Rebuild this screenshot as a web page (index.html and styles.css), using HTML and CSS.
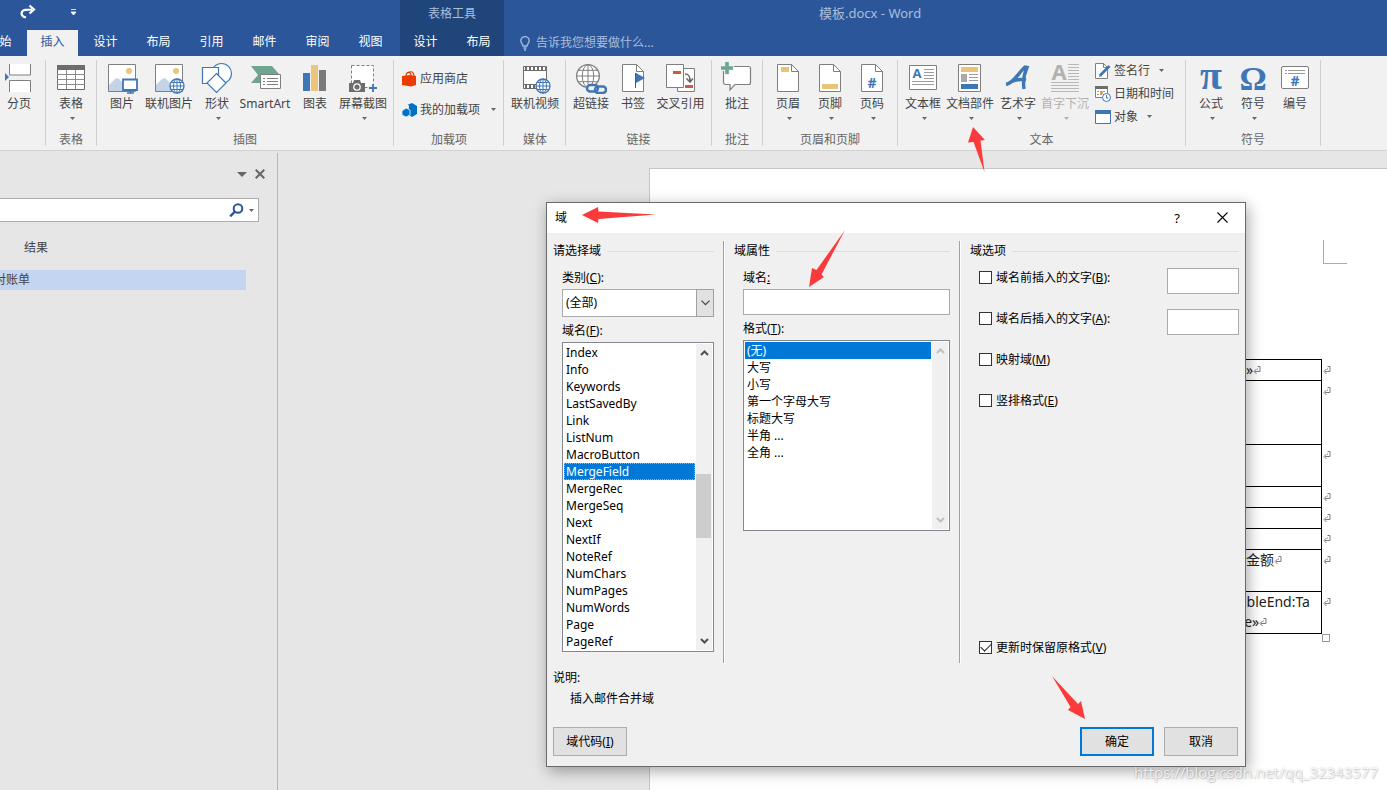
FILE: index.html
```html
<!DOCTYPE html>
<html lang="zh-CN">
<head>
<meta charset="utf-8">
<title>模板.docx - Word</title>
<link rel="stylesheet" href="styles.css">
</head>
<body>
<svg class="defs" aria-hidden="true">
  <symbol id="ret" viewBox="0 0 8 9"><path d="M4.500.5H7V5.500H2M4.500 2.500v1M3.500 3L1 5.500L3.500 8" fill="none" stroke="#7b7b7b"/></symbol>
  <symbol id="globe" viewBox="0 0 16 16"><circle cx="8" cy="8" r="7" fill="#fff"/><path vector-effect="non-scaling-stroke" d="M8 1v14M1 8h14M2 4.500h12M2 11.500h12" fill="none" stroke="currentColor"/><ellipse vector-effect="non-scaling-stroke" cx="8" cy="8" rx="3.500" ry="7" fill="none" stroke="currentColor"/><circle vector-effect="non-scaling-stroke" cx="8" cy="8" r="7" fill="none" stroke="currentColor" stroke-width="1.300"/></symbol>
  <symbol id="photo" viewBox="0 0 32 32"><path d="M2.500 2.500h27v27h-27z" fill="#fff" stroke="#7f7f7f"/><circle cx="23" cy="9" r="3" fill="#ecc57d"/><path d="M3 29V23l6-6 3-1 5 5 2 2v6z" fill="#c5d3e6"/></symbol>
  <symbol id="page" viewBox="0 0 32 32"><path d="M5.500 2.500h14l7 7v20h-21z" fill="#fff" stroke="#7f7f7f"/><path d="M19.500 2.500v7h7" fill="none" stroke="#7f7f7f"/></symbol>
  <symbol id="down" viewBox="0 0 5 3"><path d="M0 0h5L2.500 3z" fill="currentColor"/></symbol>
</svg>

<header class="titlebar">
  <div class="tb-left">
    <div class="qat">
      <button class="qat-btn" aria-label="恢复"><svg width="16" height="16" viewBox="0 0 16 16"><path d="M6 13.500C2 13 .8 10 2.200 7.500C3.500 5.500 6 5.500 12 5.500M9.500 1.500l4.500 4-4.500 4" fill="none" stroke="#fff" stroke-width="2.200"/></svg></button>
      <button class="qat-btn" aria-label="自定义快速访问工具栏"><svg width="7" height="7" viewBox="0 0 7 7"><path d="M1 .5h5M1 3h5L3.500 6z" fill="#fff" stroke="#fff" stroke-width=".8"/></svg></button>
    </div>
    <nav class="tabs tabs-main">
      <button class="tab">开始</button><button class="tab active">插入</button><button class="tab">设计</button><button class="tab">布局</button><button class="tab">引用</button><button class="tab">邮件</button><button class="tab">审阅</button><button class="tab">视图</button>
    </nav>
  </div>
  <div class="tb-context">
    <div class="context-title">表格工具</div>
    <nav class="tabs"><button class="tab">设计</button><button class="tab">布局</button></nav>
  </div>
  <div class="tb-right">
    <div class="doc-title">模板.docx - Word</div>
    <button class="tellme"><svg width="10" height="15" viewBox="0 0 10 15"><path d="M3 10C3 8 .8 7 .8 4.800a4.200 4.200 0 0 1 8.400 0C9.200 7 7 8 7 10zM3.500 12h3M4 14h2" fill="none" stroke="#a9bedd" stroke-width="1.300"/></svg>告诉我您想要做什么...</button>
  </div>
</header>

<div class="ribbon">
  <section class="group g-page">
    <div class="body">
      <button class="big w38"><svg class="ic" viewBox="0 0 32 32"><path d="M6.500 2v11h21V2M6.500 30V18.500h21V30" fill="#fff" stroke="#7f7f7f"/><path d="M2 11l4 4-4 4z" fill="#3f76b5"/></svg><span>分页</span></button>
    </div>
    <div class="caption"></div>
  </section>
  <section class="group">
    <div class="body">
      <button class="big w42"><svg class="ic" viewBox="0 0 32 32"><path d="M2.500 3.500h27v24h-27z" fill="#fff" stroke="#6d6d6d"/><path d="M2 3h28v5H2z" fill="#6d6d6d"/><path d="M2 12.500h28M2 17.500h28M2 22.500h28M11.500 8v19M20.500 8v19" stroke="#8b8b8b"/></svg><span>表格</span><svg class="dd"><use href="#down"/></svg></button>
    </div>
    <div class="caption">表格</div>
  </section>
  <section class="group wide">
    <div class="body">
      <button class="big w40"><svg class="ic" viewBox="0 0 32 32"><use href="#photo"/><path d="M17 17.500h14v10.500h-14z" fill="#fff" stroke="#3f76b5" stroke-width="1.800"/><path d="M21 31h7M24.500 28v3" stroke="#3f76b5" stroke-width="1.600"/></svg><span>图片</span></button>
      <button class="big w54"><svg class="ic" viewBox="0 0 32 32"><use href="#photo"/><use href="#globe" x="16" y="16" width="16" height="16" color="#3f76b5"/></svg><span>联机图片</span></button>
      <button class="big w42"><svg class="ic" viewBox="0 0 32 32"><g fill="#fff" stroke="#3f76b5" stroke-width="1.200"><circle cx="20.500" cy="11.500" r="10"/><path d="M1.500 5.500h16v16h-16z"/><path d="M15.500 11.500l9.500 9.500-9.500 9.500L6 21z"/></g></svg><span>形状</span><svg class="dd"><use href="#down"/></svg></button>
      <button class="big w54"><svg class="ic" viewBox="0 0 32 32"><path d="M2 4h21l7 8-7 9H2l7-8z" fill="#6fa590"/><path d="M11.500 12.500h20v14h-20z" fill="#fff" stroke="#7f7f7f"/><path d="M14 16.500h2M18 16.500h11M14 19.500h2M18 19.500h11M14 22.500h2M18 22.500h11" stroke="#7f7f7f"/></svg><span>SmartArt</span></button>
      <button class="big w46"><svg class="ic" viewBox="0 0 32 32"><path d="M4 11h7v18H4z" fill="#3f76b5"/><path d="M12 3h7v26h-7z" fill="#ecc57d"/><path d="M20 8h7v21h-7z" fill="#7a7a7a"/></svg><span>图表</span></button>
      <button class="big w50"><svg class="ic" viewBox="0 0 32 32"><path d="M4.500 3.500h22v22h-22z" fill="#fff" stroke="#7f7f7f" stroke-dasharray="3 2"/><path d="M2 21h4l1-3h6l1 3h4v9H2z" fill="#6d6d6d"/><circle cx="10" cy="25" r="3.200" fill="none" stroke="#fff" stroke-width="1.300"/><path d="M21 26h9M25.500 21.500v9" stroke="#f1f1f1" stroke-width="4"/><path d="M22 26h8M26 22v8" stroke="#3f76b5" stroke-width="1.800"/></svg><span>屏幕截图</span><svg class="dd"><use href="#down"/></svg></button>
    </div>
    <div class="caption">插图</div>
  </section>
  <section class="group g-addins">
    <div class="body col">
      <button class="small"><svg class="ic16" viewBox="0 0 16 16"><path d="M0 5l8-1 6 1v9l-5 1.500L0 14z" fill="#eb3c00"/><path d="M4 5.500C4 0 9 0 9 5M6 2c3-2.500 6-1 6 3" fill="none" stroke="#eb3c00" stroke-width="1.200"/></svg>应用商店</button>
      <button class="small"><svg class="ic16" viewBox="0 0 16 16"><path d="M5 3l5-2 5 3v8l-5 3-3-2z" fill="#0072c6"/><circle cx="4" cy="5" r="3" fill="#f1f1f1"/><path d="M0 9l4-3 4 2v5l-4 2-4-2z" fill="#0072c6" stroke="#f1f1f1" stroke-width=".8"/></svg>我的加载项<svg class="dd"><use href="#down"/></svg></button>
    </div>
    <div class="caption">加载项</div>
  </section>
  <section class="group g-media">
    <div class="body">
      <button class="big w54"><svg class="ic" viewBox="0 0 32 32"><path d="M4.500 4.500h23v22h-23z" fill="#fff" stroke="#6d6d6d"/><path d="M5 8.500h22M5 22.500h22" stroke="#6d6d6d"/><path d="M6 6.500h21M6 24.500h21" stroke="#6d6d6d" stroke-width="3" stroke-dasharray="2 2"/><use href="#globe" x="16" y="16" width="16" height="16" color="#3f76b5"/></svg><span>联机视频</span></button>
    </div>
    <div class="caption">媒体</div>
  </section>
  <section class="group wide">
    <div class="body">
      <button class="big w40"><svg class="ic" viewBox="0 0 32 32"><use href="#globe" x="0" y="1" width="26" height="26" color="#7f7f7f"/><rect x="11" y="22" width="21" height="10" fill="#f1f1f1"/><g fill="none" stroke="#3f76b5" stroke-width="2.400"><rect x="12" y="23" width="11" height="6.500" rx="3.200"/><rect x="20" y="24.500" width="11" height="6.500" rx="3.200"/></g></svg><span>超链接</span></button>
      <button class="big w44"><svg class="ic" viewBox="0 0 32 32"><use href="#page"/><path d="M18.500 11v15" stroke="#555"/><path d="M19 11l9 5-9 5z" fill="#3f76b5"/></svg><span>书签</span></button>
      <button class="big w51"><svg class="ic" viewBox="0 0 32 32"><path d="M12.500 6.500h17v23h-17z" fill="#fff" stroke="#7f7f7f"/><path d="M1.500 2.500h17v23h-17z" fill="#fff" stroke="#7f7f7f"/><path d="M8 9h8v3H8zM20 23h8v3h-8z" fill="#cc5b3c"/><path d="M20 12c4 0 5 2 5 7M21.500 16.500L25 20l3-3.500" fill="none" stroke="#666" stroke-width="1.600"/></svg><span>交叉引用</span></button>
    </div>
    <div class="caption">链接</div>
  </section>
  <section class="group">
    <div class="body">
      <button class="big w42"><svg class="ic" viewBox="0 0 32 32"><path d="M4.500 4.500h23a2 2 0 0 1 2 2v14a2 2 0 0 1-2 2H14l-5 5.500v-5.500H4.500a2 2 0 0 1-2-2v-14a2 2 0 0 1 2-2z" fill="#fff" stroke="#7f7f7f" stroke-width="1.200"/><path d="M0 6h13M6 0v13" stroke="#f1f1f1" stroke-width="6"/><path d="M0 6h12M6 0v12" stroke="#6fa590" stroke-width="3.600"/></svg><span>批注</span></button>
    </div>
    <div class="caption">批注</div>
  </section>
  <section class="group">
    <div class="body">
      <button class="big w42"><svg class="ic" viewBox="0 0 32 32"><use href="#page"/><path d="M9 5h8v5H9z" fill="#e9c377"/></svg><span>页眉</span><svg class="dd"><use href="#down"/></svg></button>
      <button class="big w42"><svg class="ic" viewBox="0 0 32 32"><use href="#page"/><path d="M8 22h16v5H8z" fill="#e9c377"/></svg><span>页脚</span><svg class="dd"><use href="#down"/></svg></button>
      <button class="big w42"><svg class="ic" viewBox="0 0 32 32"><use href="#page"/><text x="16" y="26" class="hash">#</text></svg><span>页码</span><svg class="dd"><use href="#down"/></svg></button>
    </div>
    <div class="caption">页眉和页脚</div>
  </section>
  <section class="group wide">
    <div class="body">
      <button class="big w40"><svg class="ic" viewBox="0 0 32 32"><path d="M2.500 3.500h27v24h-27z" fill="#fff" stroke="#7f7f7f"/><text x="10" y="16" class="box-a">A</text><path d="M17 7.500h10M17 10.500h10M17 13.500h10M17 16.500h10M5 19.500h22M5 22.500h22" stroke="#9c9c9c"/></svg><span>文本框</span><svg class="dd"><use href="#down"/></svg></button>
      <button class="big w54"><svg class="ic" viewBox="0 0 32 32"><path d="M4.500 2.500h22v27h-22z" fill="#fff" stroke="#7f7f7f"/><path d="M7 5h17v5H7z" fill="#e9c377"/><path d="M7 12h6v8H7z" fill="#aaa"/><path d="M7 22h17v5H7z" fill="#3f76b5"/><path d="M15 12.500h9M15 15.500h9M15 18.500h9" stroke="#9c9c9c"/></svg><span>文档部件</span><svg class="dd"><use href="#down"/></svg></button>
      <button class="big w42"><svg class="ic" viewBox="0 0 32 32"><path d="M4 22.500C12 21 17 10 23 5l2 .5C22 12 21 20 22 27M10 19.500c4-2 9-2.500 14-1.500" fill="none" stroke="#3f76b5" stroke-width="3.400"/></svg><span>艺术字</span><svg class="dd"><use href="#down"/></svg></button>
      <button class="big w52" disabled><svg class="ic" viewBox="0 0 32 32"><text x="10" y="18" class="drop-a">A</text><path d="M19 2.500h11M19 5.500h11M19 8.500h11M19 11.500h11M19 14.500h11M19 17.500h11M2 20.500h28M2 23.500h28M2 26.500h28M2 29.500h28" stroke="#b9b9b9"/></svg><span>首字下沉</span><svg class="dd"><use href="#down"/></svg></button>
      <div class="stack">
        <button class="small"><svg class="ic16" viewBox="0 0 16 16"><path d="M.5.500h8l4 4v11H.5z" fill="#fff" stroke="#7f7f7f"/><path d="M8.500.500v4h4" fill="none" stroke="#7f7f7f"/><path d="M5 12.500L14.500 3" stroke="#3f76b5" stroke-width="2.600"/><path d="M4 14l1-3 2 2z" fill="#3f76b5"/></svg>签名行<svg class="dd"><use href="#down"/></svg></button>
        <button class="small"><svg class="ic16" viewBox="0 0 16 16"><path d="M.5.500h12v11H.5z" fill="#fff" stroke="#7f7f7f"/><path d="M0 0h13v3H0z" fill="#6d6d6d"/><path d="M2 5.500h9M2 8.500h9" stroke="#999" stroke-dasharray="2 1"/><path d="M5 5h3v3H5z" fill="#e9a13b"/><circle cx="11.500" cy="11.500" r="4" fill="#fff" stroke="#3f76b5"/><path d="M11.500 9v3h2" fill="none" stroke="#3f76b5"/></svg>日期和时间</button>
        <button class="small"><svg class="ic16" viewBox="0 0 16 16"><path d="M.5 1.500h15v13H.5z" fill="#fff" stroke="#3f76b5"/><path d="M0 1h16v4H0z" fill="#3f76b5"/></svg>对象<svg class="dd"><use href="#down"/></svg></button>
      </div>
    </div>
    <div class="caption">文本</div>
  </section>
  <section class="group">
    <div class="body">
      <button class="big w42"><svg class="ic" viewBox="0 0 32 32"><text x="16" y="27" class="sym pi">π</text></svg><span>公式</span><svg class="dd"><use href="#down"/></svg></button>
      <button class="big w42"><svg class="ic" viewBox="0 0 32 32"><text x="16" y="28" class="sym">Ω</text></svg><span>符号</span><svg class="dd"><use href="#down"/></svg></button>
      <button class="big w42"><svg class="ic" viewBox="0 0 32 32"><rect x="2.500" y="4.500" width="27" height="22" rx="1.500" fill="#fff" stroke="#7f7f7f"/><path d="M6 8.500h2M9 8.500h17M6 11.500h2M9 11.500h17" stroke="#9c9c9c"/><text x="16" y="24" class="hash">#</text></svg><span>编号</span></button>
    </div>
    <div class="caption">符号</div>
  </section>
</div>

<main class="workspace">
  <aside class="navpane">
    <div class="pane-tools">
      <button aria-label="窗格选项"><svg width="10" height="5" viewBox="0 0 10 5"><path d="M0 0h10L5 5z" fill="#666"/></svg></button>
      <button aria-label="关闭窗格"><svg width="10" height="10" viewBox="0 0 10 10"><path d="M.7.700l8.600 8.600M9.300.700L.7 9.300" stroke="#666" stroke-width="2"/></svg></button>
    </div>
    <div class="search">
      <input type="text" aria-label="搜索文档">
      <svg width="15" height="15" viewBox="0 0 15 15"><circle cx="9" cy="5.500" r="4.300" fill="none" stroke="#2b579a" stroke-width="2"/><path d="M6 8.500L1.200 13.300" stroke="#2b579a" stroke-width="2.400"/></svg>
      <svg class="dd"><use href="#down"/></svg>
    </div>
    <div class="results">结果</div>
    <a class="result" href="#doc">对账单</a>
  </aside>
  <div class="canvas">
    <article class="paper" id="doc">
      <div class="crop"></div>
      <table class="doc-table">
        <tr class="r1"><td></td><td class="last">编»<svg class="ret"><use href="#ret"/></svg></td><td class="end"><svg class="ret"><use href="#ret"/></svg></td></tr>
        <tr class="r3"><td></td><td></td><td class="end"><svg class="ret"><use href="#ret"/></svg></td></tr>
        <tr class="r2"><td></td><td></td><td class="end"><svg class="ret"><use href="#ret"/></svg></td></tr>
        <tr class="r1"><td></td><td></td><td class="end"><svg class="ret"><use href="#ret"/></svg></td></tr>
        <tr class="r1"><td></td><td></td><td class="end"><svg class="ret"><use href="#ret"/></svg></td></tr>
        <tr class="r1"><td></td><td></td><td class="end"><svg class="ret"><use href="#ret"/></svg></td></tr>
        <tr class="r2"><td></td><td class="last">总金额<svg class="ret"><use href="#ret"/></svg></td><td class="end"><svg class="ret"><use href="#ret"/></svg></td></tr>
        <tr class="r2"><td></td><td class="last">TableEnd:Ta<br>ble»<svg class="ret"><use href="#ret"/></svg></td><td class="end"><svg class="ret"><use href="#ret"/></svg></td></tr>
      </table>
      <div class="table-handle"></div>
    </article>
  </div>
</main>

<div class="dialog" role="dialog" aria-labelledby="dlg-title">
  <div class="dlg-bar">
    <span id="dlg-title">域</span>
    <button class="dlg-help" aria-label="帮助">?</button>
    <button class="dlg-close" aria-label="关闭"><svg width="11" height="11" viewBox="0 0 11 11"><path d="M.5.500l10 10M10.500.500l-10 10" stroke="#000" stroke-width="1.100"/></svg></button>
  </div>
  <div class="dlg-cols">
    <section class="dcol dcol-1">
      <h2>请选择域</h2>
      <div class="fields">
        <label for="cat">类别(<u>C</u>):</label>
        <div class="combo">
          <select id="cat"><option>(全部)</option></select>
          <span class="combo-btn"><svg width="9" height="6" viewBox="0 0 9 6"><path d="M.5.700l4 4 4-4" fill="none" stroke="#444" stroke-width="1.200"/></svg></span>
        </div>
        <label id="l-field">域名(<u>F</u>):</label>
        <div class="listbox">
          <ul role="listbox" aria-labelledby="l-field">
            <li>Index</li><li>Info</li><li>Keywords</li><li>LastSavedBy</li><li>Link</li><li>ListNum</li><li>MacroButton</li><li class="sel focus">MergeField</li><li>MergeRec</li><li>MergeSeq</li><li>Next</li><li>NextIf</li><li>NoteRef</li><li>NumChars</li><li>NumPages</li><li>NumWords</li><li>Page</li><li>PageRef</li>
          </ul>
          <div class="bar">
            <svg width="9" height="6" viewBox="0 0 9 6"><path d="M1 5l3.500-3.500L8 5" fill="none" stroke="#505050" stroke-width="2"/></svg>
            <span class="thumb"></span>
            <svg width="9" height="6" viewBox="0 0 9 6"><path d="M1 1l3.500 3.500L8 1" fill="none" stroke="#505050" stroke-width="2"/></svg>
          </div>
        </div>
      </div>
    </section>
    <section class="dcol dcol-2">
      <h2>域属性</h2>
      <div class="fields">
        <label for="fname">域名<u>:</u></label>
        <input class="box" id="fname" type="text">
        <label id="l-fmt">格式(<u>T</u>):</label>
        <div class="listbox fmt">
          <ul role="listbox" aria-labelledby="l-fmt">
            <li class="sel">(无)</li><li>大写</li><li>小写</li><li>第一个字母大写</li><li>标题大写</li><li>半角 ...</li><li>全角 ...</li>
          </ul>
          <div class="bar">
            <svg width="9" height="6" viewBox="0 0 9 6"><path d="M1 5l3.500-3.500L8 5" fill="none" stroke="#bfbfbf" stroke-width="2"/></svg>
            <svg width="9" height="6" viewBox="0 0 9 6"><path d="M1 1l3.500 3.500L8 1" fill="none" stroke="#bfbfbf" stroke-width="2"/></svg>
          </div>
        </div>
      </div>
    </section>
    <section class="dcol dcol-3">
      <h2>域选项</h2>
      <div class="options">
        <div class="opt"><label><input type="checkbox">域名前插入的文字(<u>B</u>):</label><input class="box short" type="text" aria-label="域名前插入的文字"></div>
        <div class="opt"><label><input type="checkbox">域名后插入的文字(<u>A</u>):</label><input class="box short" type="text" aria-label="域名后插入的文字"></div>
        <div class="opt"><label><input type="checkbox">映射域(<u>M</u>)</label></div>
        <div class="opt"><label><input type="checkbox">竖排格式(<u>E</u>)</label></div>
        <div class="opt keep"><label><input type="checkbox" checked>更新时保留原格式(<u>V</u>)</label></div>
      </div>
    </section>
  </div>
  <div class="desc"><div>说明:</div><p>插入邮件合并域</p></div>
  <div class="dlg-buttons">
    <button class="btn">域代码(<u>I</u>)</button>
    <span class="spring"></span>
    <button class="btn primary">确定</button>
    <button class="btn">取消</button>
  </div>
</div>

<svg class="marks" width="1387" height="790" viewBox="0 0 1387 790" aria-hidden="true">
  <g fill="#fb3b3b">
    <path d="M973 127l12 13-4.500.5 4 31.500-11-30-5.500.5z"/>
    <path d="M582 215l16-8 .5 4.500 57.500 3-57.500 4.500-.5 4z"/>
    <path d="M809 287l3-19 4.500 2L845 230l-23.500 44.500 2.500 2.500z"/>
    <path d="M1085 719l-17-9 2.500-3L1052 676l26 28 3-3z"/>
  </g>
</svg>
<div class="watermark">https://blog.csdn.net/qq_32343577</div>
</body>
</html>
```
FILE: styles.css
```css
* { box-sizing: border-box; }
html, body { height: 100%; }
body {
  margin: 0;
  display: flex;
  flex-direction: column;
  position: relative;
  overflow: hidden;
  background: #e6e6e6;
  color: #444;
  font: 12px/18px "Noto Sans", "Noto Sans CJK SC", sans-serif;
}
button, input, select { font: inherit; color: inherit; }
button { border: 0; padding: 0; background: none; white-space: nowrap; }
.defs { position: absolute; width: 0; height: 0; }

/* Title bar */
.titlebar { display: flex; height: 56px; flex: none; background: #2b579a; color: #fff; }
.tb-left { width: 400px; flex: none; }
.qat { display: flex; align-items: center; gap: 34px; height: 30px; padding: 0 0 6px 20px; }
.qat-btn { display: flex; }
.tabs { display: flex; gap: 2px; height: 26px; }
.tabs-main { margin-left: -26px; }
.tab { width: 51px; padding-bottom: 2px; }
.tab.active { background: #f1f1f1; color: #2b579a; }
.tb-context { flex: none; background: #20457b; }
.context-title { height: 30px; line-height: 28px; text-align: center; color: #a9bedd; }
.tb-right { flex: 1; min-width: 0; }
.doc-title { height: 30px; padding-left: 315px; font-size: 13px; line-height: 26px; color: #a9bedd; }
.tellme { display: flex; align-items: center; gap: 6px; height: 26px; padding-left: 16px; color: #a9bedd; }

/* Ribbon */
.ribbon { display: flex; flex: none; height: 95px; background: #f1f1f1; border-bottom: 1px solid #d2d2d2; }
.group { position: relative; display: flex; flex-direction: column; flex: none; padding: 0 5px 0 4px; }
.group::after { content: ""; position: absolute; right: 0; top: 4px; bottom: 4px; width: 1px; background: #d0d0d0; }
.wide { padding: 0 6px 0 5px; }
.g-page { padding-left: 0; padding-right: 8px; }
.g-addins { padding: 0 8px; }
.g-media { padding: 0 4px; }
.body { display: flex; height: 75px; }
.col { flex-direction: column; padding-top: 7px; }
.caption { height: 18px; text-align: center; color: #666; }
.big { display: flex; flex-direction: column; align-items: center; padding-top: 6px; }
.big span { line-height: 20px; }
.big:disabled { color: #b1b1b1; }
.ic { width: 32px; height: 32px; flex: none; }
.ic16 { width: 16px; height: 16px; flex: none; }
.dd { width: 5px; height: 3px; flex: none; color: #666; }
.big .dd { margin: 3px 0 0 2px; }
.big:disabled .dd { color: #b1b1b1; }
.w38 { width: 38px; }
.w40 { width: 40px; }
.w42 { width: 42px; }
.w44 { width: 44px; }
.w46 { width: 46px; }
.w50 { width: 50px; }
.w51 { width: 51px; }
.w52 { width: 52px; }
.w54 { width: 54px; }
.small { display: flex; align-items: center; gap: 3px; height: 23px; }
.col .small { height: 31px; gap: 2px; }
.small .dd { margin-left: 6px; }
.col .small .dd { margin-left: 9px; }
.stack { padding: 3px 6px 0 4px; }
.hash { font: bold 14px "Open Sans", sans-serif; fill: #3f76b5; text-anchor: middle; }
.box-a { font: bold 13px "Open Sans", sans-serif; fill: #3f76b5; text-anchor: middle; }
.drop-a { font: bold 22px "Open Sans", sans-serif; fill: #b1b1b1; text-anchor: middle; }
.sym { font: bold 34px "Liberation Serif", serif; fill: #3f76b5; text-anchor: middle; }
.pi { font-size: 40px; }

/* Workspace */
.workspace { display: flex; flex: 1; min-height: 0; padding-top: 2px; }
.navpane { width: 278px; flex: none; border-right: 1px solid #b5b5b5; }
.pane-tools { display: flex; justify-content: flex-end; align-items: center; gap: 8px; height: 42px; padding-right: 12px; }
.pane-tools button { display: flex; }
.search { display: flex; align-items: center; gap: 5px; height: 24px; margin: 3px 18px 0 -1px; padding-right: 4px; background: #fff; border: 1px solid #ababab; }
.search input { flex: 1; min-width: 0; height: 20px; border: 0; outline: 0; background: none; }
.results { margin-top: 17px; padding-left: 24px; }
.result { display: block; height: 20px; margin: 13px 31px 0 0; background: #c3d5f0; color: #444; line-height: 20px; text-decoration: none; text-indent: -6px; }
.canvas { flex: 1; min-width: 0; display: flex; padding: 15px 0 0 371px; overflow: hidden; }
.paper { flex: 1; position: relative; background: #fff; border: solid #c6c6c6; border-width: 1px 0 0 1px; }
.crop { width: 24px; height: 24px; margin: 71px 0 0 673px; border: solid #ababab; border-width: 0 0 1px 1px; }
.doc-table { width: 683px; margin: 95px 0 0 0; border-collapse: collapse; table-layout: fixed; color: #222; font-size: 14px; line-height: 20px; }
.doc-table td { padding: 0; border: 1px solid #000; vertical-align: top; }
.doc-table .last, .doc-table td:nth-child(2) { width: 110px; padding-left: 20px; white-space: nowrap; }
.doc-table td.end { width: 11px; border: 0; padding-left: 1px; }
.r1 { height: 21px; }
.r2 { height: 42px; }
.r3 { height: 64px; }
.ret { width: 8px; height: 9px; }
.table-handle { width: 8px; height: 8px; margin-left: 672px; border: 1px solid #999; }

/* Field dialog */
.dialog {
  position: absolute;
  left: 546px;
  top: 202px;
  width: 700px;
  display: flex;
  flex-direction: column;
  background: #f0f0f0;
  border: 1px solid #6a6a6a;
  box-shadow: 2px 4px 14px rgba(0, 0, 0, .35);
  color: #000;
}
.dlg-bar { display: flex; align-items: center; height: 30px; padding: 0 17px 0 8px; background: #fff; }
.dlg-bar span { flex: 1; }
.dlg-help { font-size: 13px; margin-right: 37px; }
.dlg-close { display: flex; padding-bottom: 2px; }
.dlg-cols { display: grid; grid-template-columns: 177px 236px 1fr; height: 422px; margin-top: 8px; }
.dcol { padding-right: 9px; border-right: 1px solid #a0a0a0; box-shadow: 1px 0 #fff; display: flex; flex-direction: column; }
.dcol-1 { padding-left: 6px; }
.dcol-2 { padding-left: 10px; }
.dcol-3 { padding: 0 6px 0 10px; border: 0; box-shadow: none; }
.dcol h2 { display: flex; align-items: center; gap: 6px; margin: 0; font-size: 12px; font-weight: 400; line-height: 20px; }
.dcol h2::after { content: ""; flex: 1; height: 1px; background: #dcdcdc; }
.fields { display: flex; flex-direction: column; padding: 8px 0 0 9px; }
.fields label { height: 20px; }
.combo { position: relative; display: flex; height: 28px; margin-bottom: 5px; }
.combo select { flex: 1; width: 100%; padding: 0 3px; background: #fff; border: 1px solid #ababab; border-radius: 0; appearance: none; }
.combo-btn { position: absolute; right: 0; top: 0; bottom: 0; width: 18px; display: flex; align-items: center; justify-content: center; background: #e1e1e1; border: 1px solid #a0a0a0; pointer-events: none; }
.listbox { display: flex; padding: 1px; background: #fff; border: 1px solid #828790; }
.listbox ul { flex: 1; margin: 0; padding: 0 1px 0 0; list-style: none; }
.listbox li { height: 17px; padding-left: 2px; line-height: 17px; }
.sel { background: #0078d7; color: #fff; }
.focus { outline: 1px dotted #e8a060; outline-offset: -1px; }
.bar { display: flex; flex-direction: column; align-items: center; justify-content: space-between; width: 16px; padding: 6px 0; background: #f0f0f0; }
.bar .thumb { width: 15px; height: 64px; margin-top: 18px; background: #cdcdcd; align-self: flex-start; }
.fmt { height: 191px; }
.box { width: 100%; height: 26px; margin-bottom: 5px; padding: 0 4px; background: #fff; border: 1px solid #ababab; }
.short { width: 72px; margin: 0; }
.options { display: flex; flex-direction: column; flex: 1; padding: 7px 0 5px 9px; }
.opt { display: flex; justify-content: space-between; height: 41px; }
.opt label { display: flex; align-items: center; height: 20px; }
.opt input[type=checkbox] { appearance: none; width: 13px; height: 13px; margin: 0 4px 1px 0; background: #fff; border: 1px solid #333; }
.opt input[type=checkbox]:checked { display: grid; place-items: center; }
.opt input[type=checkbox]:checked::after { content: ""; width: 9px; height: 5px; border: solid #222; border-width: 0 0 1px 1px; transform: rotate(-45deg); margin-bottom: 3px; }
.keep { height: 20px; margin-top: auto; }
.desc { padding: 4px 6px 0; line-height: 21px; }
.desc p { margin: 0; padding-left: 17px; }
.dlg-buttons { display: flex; gap: 10px; padding: 18px 7px 10px 6px; }
.spring { flex: 1; }
.btn { width: 74px; height: 29px; background: #e1e1e1; border: 1px solid #adadad; }
.primary { border: 2px solid #0078d7; }

.marks { position: absolute; left: 0; top: 0; pointer-events: none; }
.watermark { position: absolute; right: 9px; bottom: 8px; font: 15px/20px "Open Sans", sans-serif; color: #fffc; text-shadow: 0 0 2px #0004, 1px 1px 1px #0002; }
```
